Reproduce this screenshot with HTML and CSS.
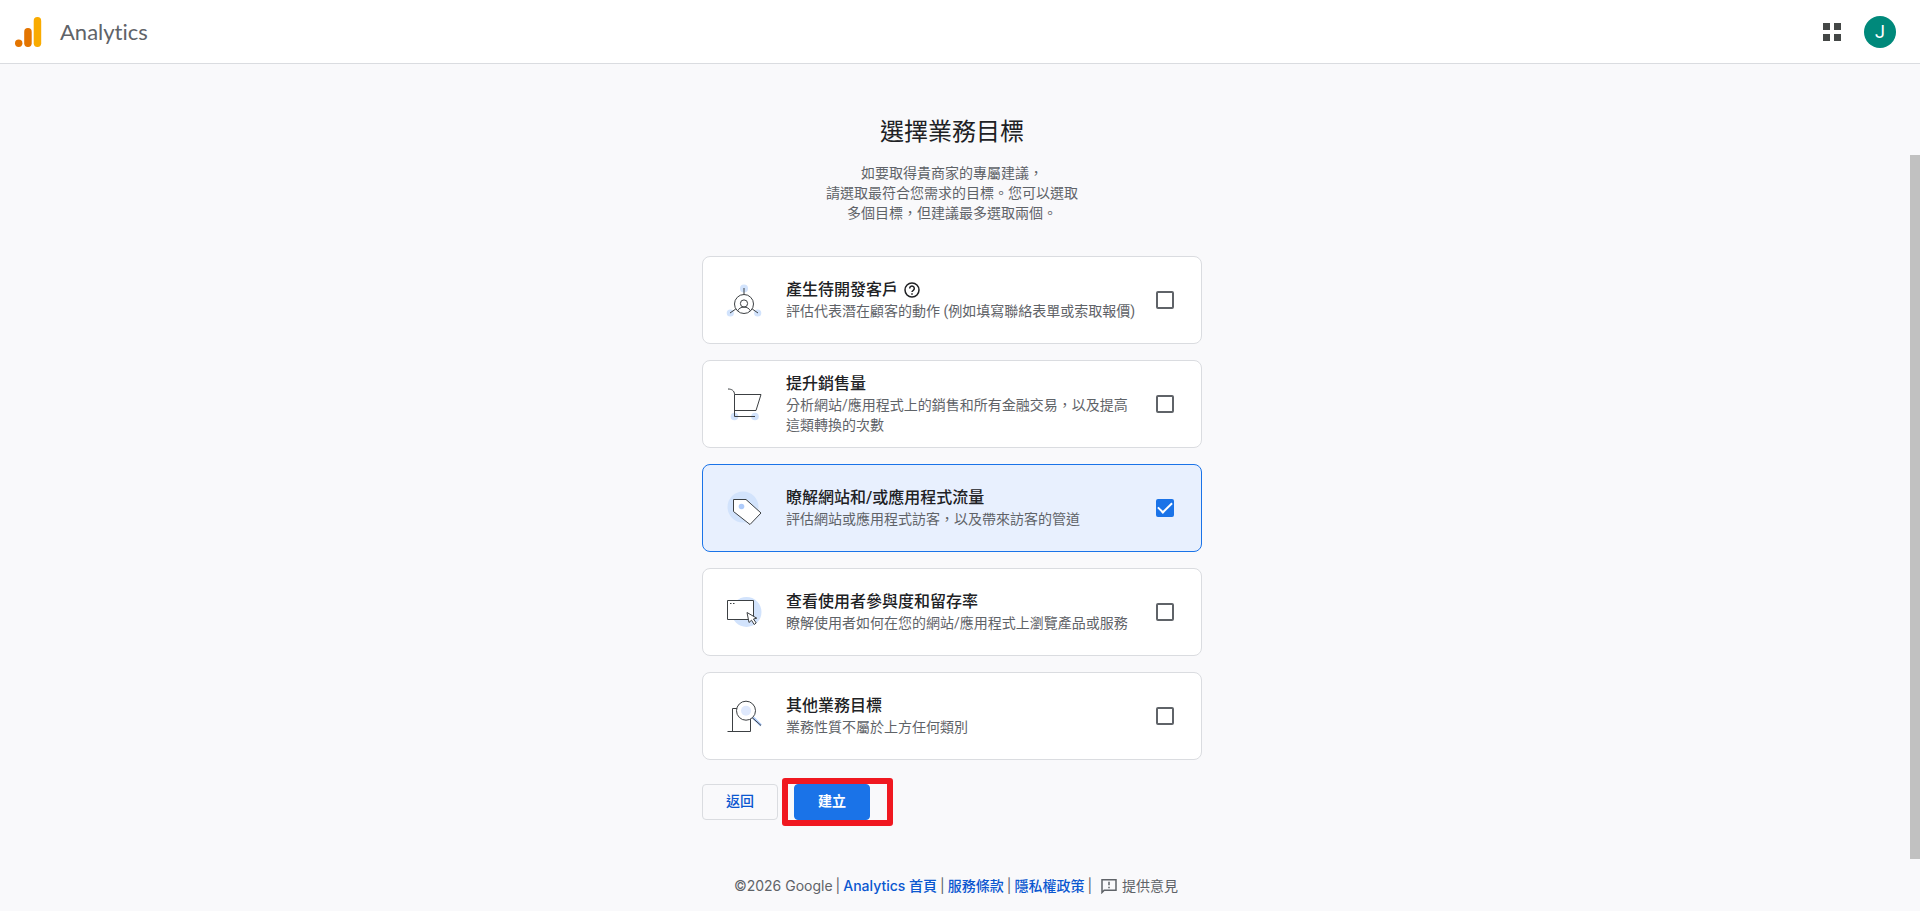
FILE: index.html
```html
<!DOCTYPE html>
<html lang="zh-Hant-TW">
<head>
<meta charset="utf-8">
<meta name="viewport" content="width=device-width, initial-scale=1">
<title>Analytics</title>
<link rel="stylesheet" href="styles.css">
</head>
<body>
<header class="topbar">
  <div class="brand">
    <svg class="logo" width="32" height="32" viewBox="0 0 32 32" aria-hidden="true">
      <circle cx="5.7" cy="27.2" r="3.7" fill="#e37400"/>
      <rect x="11.200" y="12" width="7.5" height="19" rx="3.7" fill="#e37400"/>
      <rect x="20.700" y="1" width="7.5" height="30" rx="3.7" fill="#f9ab00"/>
    </svg>
    <span class="product">Analytics</span>
  </div>
  <div class="account">
    <button class="icon-button" type="button" aria-label="Google 應用程式">
      <svg width="18" height="18" viewBox="0 0 18 18" fill="#444746" aria-hidden="true">
        <path d="M0 0h7v7H0zM11 0h7v7h-7zM0 11h7v7H0zM11 11h7v7h-7z"/>
      </svg>
    </button>
    <button class="avatar" type="button">J</button>
  </div>
</header>

<main class="page">
  <h1 class="title">選擇業務目標</h1>
  <p class="intro">如要取得貴商家的專屬建議，<br>請選取最符合您需求的目標。您可以選取<br>多個目標，但建議最多選取兩個。</p>

  <form class="goals">
    <label class="goal">
      <svg class="goal-icon" width="36" height="36" viewBox="0 0 36 36" fill="none" stroke="#3c4043" aria-hidden="true">
        <g fill="#d2e3fc" stroke="none"><circle cx="18" cy="6.5" r="4"/><circle cx="4.3" cy="31" r="3.6"/><circle cx="31.7" cy="31" r="3.6"/></g>
        <circle cx="18" cy="22" r="9.5"/>
        <circle cx="18" cy="21.5" r="3.6"/>
        <path d="M18 6v6.5M9.800 27L4 31M26.200 27L32 31M11.500 29c1.200-2.500 3.500-3.900 6.500-3.900s5.300 1.400 6.500 3.900"/>
      </svg>
      <span class="goal-text">
        <span class="goal-name">產生待開發客戶
          <svg class="help" width="16" height="16" viewBox="0 0 16 16" fill="none" stroke="#202124" stroke-width="1.500" aria-hidden="true">
            <circle cx="8" cy="8" r="7"/><path d="M5.700 6.400a2.300 2.300 0 1 1 3.600 1.900C8.400 8.900 8 9.200 8 10.100"/><path d="M8 11.200v1.500"/>
          </svg>
        </span>
        <span class="goal-desc">評估代表潛在顧客的動作 (例如填寫聯絡表單或索取報價)</span>
      </span>
      <input class="check" type="checkbox">
    </label>

    <label class="goal">
      <svg class="goal-icon" width="36" height="36" viewBox="0 0 36 36" fill="none" stroke="#3c4043" aria-hidden="true">
        <g fill="#d2e3fc" stroke="none"><circle cx="8.500" cy="30.500" r="3.800"/><circle cx="29" cy="30.500" r="3.800"/></g>
        <path d="M2 3c3.500 0 6.500 1.500 6.500 5.500v22H29M8.500 8.500H35l-5 16H8.500"/>
      </svg>
      <span class="goal-text">
        <span class="goal-name">提升銷售量</span>
        <span class="goal-desc">分析網站/應用程式上的銷售和所有金融交易，以及提高這類轉換的次數</span>
      </span>
      <input class="check" type="checkbox">
    </label>

    <label class="goal">
      <svg class="goal-icon" width="36" height="36" viewBox="0 0 36 36" fill="none" stroke="#3c4043" aria-hidden="true">
        <circle cx="17" cy="17" r="15.500" fill="#d2e3fc" stroke="none"/>
        <path d="M7.500 9.500h12.500l15 13.500L24 34.500 7.500 21.500z" fill="#fff"/>
        <circle cx="15.500" cy="16.500" r="2.800" fill="#aecbfa" stroke="none"/>
      </svg>
      <span class="goal-text">
        <span class="goal-name">瞭解網站和/或應用程式流量</span>
        <span class="goal-desc">評估網站或應用程式訪客，以及帶來訪客的管道</span>
      </span>
      <input class="check" type="checkbox" checked>
    </label>

    <label class="goal">
      <svg class="goal-icon" width="36" height="36" viewBox="0 0 36 36" fill="none" stroke="#3c4043" aria-hidden="true">
        <circle cx="20.500" cy="18" r="15" fill="#d2e3fc" stroke="none"/>
        <path d="M1.500 6.500h26v19h-26z" fill="#fff"/>
        <path d="M4 9.500h1.500M7 9.500h1.500"/>
        <path d="M21 18.500l2 10 2.500-2.300 2.700 4.300 2-1.500-2.700-4 3.300-.8z" fill="#fff"/>
      </svg>
      <span class="goal-text">
        <span class="goal-name">查看使用者參與度和留存率</span>
        <span class="goal-desc">瞭解使用者如何在您的網站/應用程式上瀏覽產品或服務</span>
      </span>
      <input class="check" type="checkbox">
    </label>

    <label class="goal">
      <svg class="goal-icon" width="36" height="36" viewBox="0 0 36 36" fill="none" stroke="#3c4043" aria-hidden="true">
        <path d="M1.500 33.500h23V21M6.500 33.500v-23h5"/>
        <path d="M27 19.500l8 8" stroke="#aecbfa" stroke-width="2.500"/>
        <path d="M26 19.500l9 8"/>
        <circle cx="20" cy="12.700" r="9.500" fill="#fff"/>
        <circle cx="20" cy="12.700" r="5" fill="#dfe9fd" stroke="none"/>
      </svg>
      <span class="goal-text">
        <span class="goal-name">其他業務目標</span>
        <span class="goal-desc">業務性質不屬於上方任何類別</span>
      </span>
      <input class="check" type="checkbox">
    </label>

    <div class="actions">
      <button class="button" type="button">返回</button>
      <div class="highlighted">
        <button class="button button-primary" type="submit">建立</button>
        <span class="highlight"></span>
      </div>
    </div>
  </form>

  <footer class="footer">
    <span>©2026 Google</span><span>|</span>
    <a href="#home">Analytics 首頁</a><span>|</span>
    <a href="#terms">服務條款</a><span>|</span>
    <a href="#privacy">隱私權政策</a><span>|</span>
    <button class="feedback" type="button">
      <svg width="16" height="16" viewBox="0 0 16 16" fill="none" stroke="#5f6368" stroke-width="1.500" aria-hidden="true">
        <path d="M1 14.500V1.700h14v10.600H3.200z"/><path d="M8 3.700v3.600M8 8.700v1.600"/>
      </svg>
      提供意見
    </button>
  </footer>
</main>
<div class="scroll-thumb"></div>
</body>
</html>
```

FILE: styles.css
```css
* {
  box-sizing: border-box;
}

body {
  margin: 0;
  min-height: 100vh;
  background: #f9f9fb;
  color: #202124;
  font-family: Roboto, "Noto Sans CJK TC", sans-serif;
  font-size: 14px;
  line-height: 20px;
}

button {
  font: inherit;
  cursor: pointer;
}

.topbar {
  display: flex;
  align-items: center;
  justify-content: space-between;
  height: 64px;
  padding: 0 24px 0 13px;
  background: #fff;
  border-bottom: 1px solid #dadce0;
}

.brand {
  display: flex;
  align-items: center;
  gap: 15px;
}

.logo {
  display: block;
}

.product {
  color: #5f6368;
  font-family: Lato, sans-serif;
  font-size: 22px;
  font-variant-ligatures: none;
  line-height: 28px;
}

.account {
  display: flex;
  align-items: center;
  gap: 12px;
}

.icon-button {
  display: grid;
  place-items: center;
  width: 40px;
  height: 40px;
  padding: 0;
  background: none;
  border: 0;
}

.avatar {
  width: 32px;
  height: 32px;
  padding: 0;
  border: 0;
  border-radius: 50%;
  background: #00897b;
  color: #fff;
  font-size: 18px;
}

.page {
  display: flex;
  flex-direction: column;
  align-items: center;
  padding: 52px 16px 16px 0;
}

.title {
  margin: 0;
  font-size: 24px;
  font-weight: 400;
  line-height: 32px;
}

.intro {
  margin: 15px 0 33px;
  color: #5f6368;
  text-align: center;
}

.goals {
  display: flex;
  flex-direction: column;
  gap: 16px;
  width: 100%;
  max-width: 500px;
}

.goal {
  display: flex;
  align-items: center;
  min-height: 88px;
  padding: 8px 27px 8px 23px;
  background: #fff;
  border: 1px solid #dadce0;
  border-radius: 8px;
  cursor: pointer;
}

.goal:has(:checked) {
  background: #e8f0fe;
  border-color: #1a73e8;
}

.goal-icon {
  flex: none;
  margin-right: 24px;
}

.goal-text {
  flex: 1;
  display: flex;
  flex-direction: column;
}

.goal-name {
  display: flex;
  align-items: center;
  gap: 6px;
  font-size: 16px;
  font-weight: 500;
  line-height: 22px;
}

.goal-desc {
  color: #5f6368;
}

.check {
  appearance: none;
  display: grid;
  place-items: center;
  flex: none;
  width: 18px;
  height: 18px;
  margin: 0 0 0 18px;
  background: #fff;
  border: 2px solid #5f6368;
  border-radius: 2px;
}

.check:checked {
  background: #1a73e8;
  border-color: #1a73e8;
}

.check:checked::before {
  content: "";
  width: 12px;
  height: 6px;
  margin-bottom: 4px;
  border: solid #fff;
  border-width: 0 0 2px 2px;
  rotate: -45deg;
}

.actions {
  display: flex;
  gap: 16px;
  margin-top: 8px;
}

.button {
  height: 36px;
  padding: 0 23px 2px;
  background: #f9f9fb;
  border: 1px solid #dadce0;
  border-radius: 4px;
  color: #0b57d0;
  font-weight: 500;
}

.button-primary {
  background: #1a73e8;
  border-color: #1a73e8;
  color: #fff;
  font-weight: 700;
}

.highlighted {
  position: relative;
}

/* Red frame drawn over the submit button */
.highlight {
  position: absolute;
  inset: -6px -23px -6px -12px;
  border: 6px solid #f01820;
  border-radius: 3px;
  pointer-events: none;
}

.footer {
  display: flex;
  align-items: center;
  gap: 3px;
  margin-top: 55px;
  padding-left: 8px;
  color: #5f6368;
  font-family: Inter, "Noto Sans CJK TC", sans-serif;
}

.footer a {
  color: #0b57d0;
  font-weight: 500;
  text-decoration: none;
}

.feedback {
  display: flex;
  align-items: center;
  gap: 5px;
  padding: 1px 0 0 6px;
  background: none;
  border: 0;
  color: inherit;
}

.scroll-thumb {
  position: fixed;
  top: 155px;
  right: 0;
  bottom: 52px;
  width: 10px;
  background: #c1c1c1;
}
```
